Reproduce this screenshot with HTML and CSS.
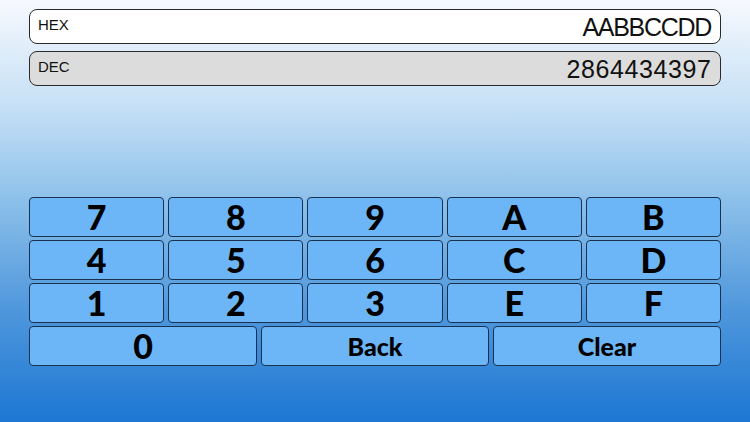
FILE: index.html
```html
<!DOCTYPE html>
<html>
<head>
<meta charset="utf-8">
<link rel="stylesheet" href="styles.css">
</head>
<body>
<div class="app">
  <div class="fields">
    <div class="field hex"><span class="label">HEX</span><span class="value">AABBCCDD</span></div>
    <div class="field dec"><span class="label">DEC</span><span class="value">2864434397</span></div>
  </div>
  <div class="pad">
    <div class="row five">
      <div class="key">7</div><div class="key">8</div><div class="key">9</div><div class="key">A</div><div class="key">B</div>
    </div>
    <div class="row five">
      <div class="key">4</div><div class="key">5</div><div class="key">6</div><div class="key">C</div><div class="key">D</div>
    </div>
    <div class="row five">
      <div class="key">1</div><div class="key">2</div><div class="key">3</div><div class="key">E</div><div class="key">F</div>
    </div>
    <div class="row three">
      <div class="key">0</div><div class="key word">Back</div><div class="key word">Clear</div>
    </div>
  </div>
</div>
</body>
</html>
```
FILE: styles.css
```css
html, body {
  margin: 0;
  padding: 0;
  width: 750px;
  height: 422px;
  overflow: hidden;
}
body {
  background: linear-gradient(to bottom, #f6f9fe 0px, #c4dff5 110px, #8cc0ea 200px, #4f97dc 310px, #1d77d3 422px);
}
.app {
  padding: 9px 29px 0 29px;
  display: flex;
  flex-direction: column;
}
.fields {
  display: flex;
  flex-direction: column;
  gap: 7px;
}
.field {
  height: 33px;
  border: 1px solid #2a2a2a;
  border-radius: 8px;
  display: flex;
  align-items: center;
  justify-content: space-between;
  padding: 0 9px 0 8px;
  font-family: "Liberation Sans", Arial, sans-serif;
  color: #111;
}
.hex { background: #ffffff; }
.dec { background: #dcdcdc; }
.label {
  font-size: 15px;
  margin-top: -4px;
}
.value {
  font-size: 25px;
  margin-top: 1px;
}
.hex .value { letter-spacing: -1.3px; }
.dec .value { letter-spacing: 0.6px; margin-right: -0.6px; }
.pad {
  margin-top: 111px;
  display: flex;
  flex-direction: column;
  gap: 3px;
}
.row {
  display: grid;
  gap: 4px;
}
.five { grid-template-columns: repeat(5, 1fr); }
.three { grid-template-columns: repeat(3, 1fr); }
.key {
  height: 38px;
  background: #6cb5f7;
  border: 1px solid #1b3150;
  border-radius: 4px;
  display: flex;
  align-items: center;
  justify-content: center;
  font-family: Lato, "Noto Sans", sans-serif;
  font-weight: 900;
  font-size: 34px;
  color: #000;
  line-height: 1;
}
.word {
  font-size: 25px;
}
```
